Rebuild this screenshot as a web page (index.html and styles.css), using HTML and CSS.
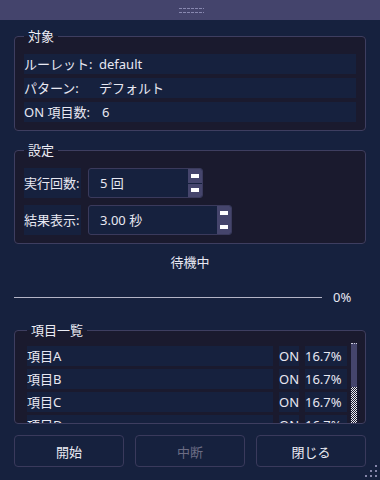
FILE: index.html
```html
<!DOCTYPE html>
<html lang="ja">
<head>
  <meta charset="UTF-8">
  <title>ルーレット</title>
  <link rel="stylesheet" href="styles.css">
</head>
<body>
  <div class="title-bar"><span class="grip-dots"></span></div>
  <main class="panel">
    <fieldset class="group group-target">
      <legend class="group-title">対象</legend>
      <div class="info-row"><span class="info-label">ルーレット:</span>default</div>
      <div class="info-row"><span class="info-label">パターン:</span>デフォルト</div>
      <div class="info-row"><span class="info-label wide">ON 項目数:</span>6</div>
    </fieldset>

    <fieldset class="group group-settings">
      <legend class="group-title">設定</legend>
      <div class="setting-row">
        <span class="setting-label">実行回数:</span>
        <div class="spin spin-count">
          <span class="spin-value">5 回</span>
          <span class="spin-buttons split"><i class="spin-up"></i><i class="spin-down"></i></span>
        </div>
      </div>
      <div class="setting-row">
        <span class="setting-label">結果表示:</span>
        <div class="spin spin-time">
          <span class="spin-value">3.00 秒</span>
          <span class="spin-buttons"><i class="spin-up"></i><i class="spin-down"></i></span>
        </div>
      </div>
    </fieldset>

    <div class="status">待機中</div>
    <div class="progress-row">
      <div class="progress-line"></div>
      <span class="progress-text">0%</span>
    </div>

    <fieldset class="group group-list">
      <legend class="group-title">項目一覧</legend>
      <div class="list">
        <div class="list-rows">
          <div class="list-row"><span class="cell-name">項目A</span><span class="cell-on">ON</span><span class="cell-pct">16.7%</span></div>
          <div class="list-row"><span class="cell-name">項目B</span><span class="cell-on">ON</span><span class="cell-pct">16.7%</span></div>
          <div class="list-row"><span class="cell-name">項目C</span><span class="cell-on">ON</span><span class="cell-pct">16.7%</span></div>
          <div class="list-row"><span class="cell-name">項目D</span><span class="cell-on">ON</span><span class="cell-pct">16.7%</span></div>
        </div>
        <div class="scrollbar"><div class="scroll-thumb"></div></div>
      </div>
    </fieldset>

    <div class="button-row">
      <button type="button" class="btn">開始</button>
      <button type="button" class="btn" disabled>中断</button>
      <button type="button" class="btn">閉じる</button>
    </div>
  </main>
  <svg class="size-grip" width="14" height="14" viewBox="0 0 14 14">
    <g fill="#8484a8">
      <rect x="11" y="1" width="2" height="2"/>
      <rect x="6" y="6" width="2" height="2"/>
      <rect x="11" y="6" width="2" height="2"/>
      <rect x="1" y="11" width="2" height="2"/>
      <rect x="6" y="11" width="2" height="2"/>
      <rect x="11" y="11" width="2" height="2"/>
    </g>
  </svg>
</body>
</html>
```

FILE: styles.css
```css
body {
  font-family: 'Noto Sans', 'Noto Sans CJK JP', sans-serif;
  font-size: 13px;
  background: #16213e;
  color: #e8e8f2;
  margin: 0;
  padding: 0;
  width: 380px;
  height: 480px;
  overflow: hidden;
  position: relative;
}
.title-bar {
  height: 20px;
  background: #44446c;
  position: relative;
}
.grip-dots {
  position: absolute;
  left: 178px;
  top: 8px;
  width: 26px;
  height: 5px;
  background: conic-gradient(from 90deg at 1px 1px, transparent 75%, #8888b0 0) 0 0/4px 4px;
}
.panel {
  padding: 0 14px;
}
.group {
  margin: 0;
  border: 1px solid #3e3e60;
  border-radius: 4px;
  background: #1a1a2e;
  min-inline-size: 0;
}
.group-title {
  padding: 0 4px;
  margin-left: 0;
  line-height: 16px;
  font-size: 13px;
  color: #ececf4;
}
.group-target {
  margin-top: 8px;
  padding: 10px 9px 8px 9px;
}
.info-row {
  height: 20px;
  line-height: 20px;
  background: #16213e;
  margin-bottom: 4px;
  white-space: nowrap;
}
.info-row:last-child { margin-bottom: 0; }
.info-label {
  display: inline-block;
  width: 75px;
}
.info-label.wide { width: 78px; }

.group-settings {
  margin-top: 11px;
  padding: 10px 9px 8px 9px;
}
.setting-row {
  display: flex;
  gap: 7px;
  height: 30px;
  margin-bottom: 7px;
}
.setting-row:last-child { margin-bottom: 0; }
.setting-label {
  width: 57px;
  background: #16213e;
  line-height: 30px;
  white-space: nowrap;
}
.spin {
  display: flex;
  border: 1px solid #3a3a5c;
  border-radius: 3px;
  background: #16213e;
  box-sizing: border-box;
  overflow: hidden;
}
.spin-count { width: 115px; }
.spin-time { width: 144px; }
.spin-value {
  flex: 1;
  padding-left: 11px;
  line-height: 28px;
}
.spin-buttons {
  width: 14px;
  display: flex;
  flex-direction: column;
  background: #45456c;
}
.spin-buttons i {
  flex: 1;
  display: flex;
  align-items: center;
  justify-content: center;
}
.spin-buttons i::before {
  content: "";
  width: 8px;
  height: 4px;
  background: #fff;
}
.spin-buttons.split .spin-up {
  border-bottom: 1px solid #16213e;
}

.status {
  margin-top: 9px;
  height: 18px;
  line-height: 18px;
  text-align: center;
}
.progress-row {
  display: flex;
  align-items: center;
  gap: 11px;
  height: 16px;
  margin-top: 18px;
}
.progress-line {
  flex: 1;
  height: 1px;
  background: #b4b4c6;
}
.progress-text {
  width: 33px;
  line-height: 16px;
}

.group-list {
  margin-top: 17px;
  padding: 5px 8px 0 12px;
}
.list {
  display: flex;
  gap: 4px;
  height: 80px;
}
.list-rows {
  flex: 1;
  padding-top: 3px;
  overflow: hidden;
}
.list-row {
  display: flex;
  gap: 6px;
  height: 20px;
  line-height: 20px;
  margin-bottom: 3px;
}
.list-row span {
  background: #16213e;
  white-space: nowrap;
}
.cell-name { flex: 1; }
.cell-on { width: 20px; }
.cell-pct { width: 42px; }
.scrollbar {
  width: 6px;
  background: conic-gradient(#e8e8f0 25%, #1a1a2e 0 50%, #e8e8f0 0 75%, #1a1a2e 0) 0 0/2px 2px;
}
.scroll-thumb {
  height: 44px;
  background: #45456c;
  border-top: 1px dotted #d0d0e0;
  box-sizing: border-box;
}

.button-row {
  display: flex;
  gap: 11px;
  margin-top: 11px;
}
.btn {
  flex: 1;
  height: 32px;
  background: #16213e;
  border: 1px solid #3a3a5c;
  border-radius: 4px;
  color: #ececf4;
  font-family: inherit;
  font-size: 13px;
  padding: 0;
}
.btn:disabled {
  color: #6c6c84;
}
.size-grip {
  position: absolute;
  right: 2px;
  bottom: 2px;
}
```
